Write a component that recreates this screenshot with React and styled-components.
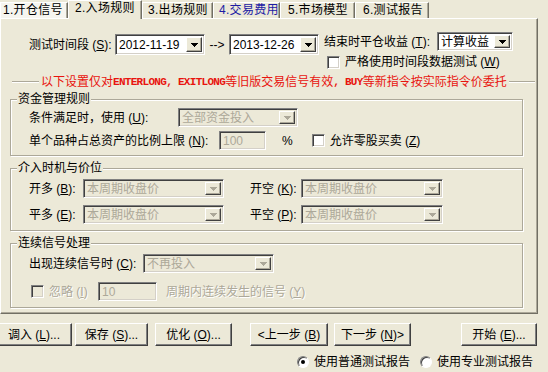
import React from 'react'
import styled, { createGlobalStyle } from 'styled-components'

const GlobalStyle = createGlobalStyle`
  html, body {
    margin: 0;
    padding: 0;
    background: #ece9d8;
  }
  body {
    font-family: "Liberation Sans", "Noto Sans CJK SC", sans-serif;
    font-size: 12px;
    color: #000;
  }
  u {
    text-decoration-thickness: 1px;
    text-underline-offset: 1px;
  }
`

const Window = styled.div`
  width: 548px;
  height: 372px;
  overflow: hidden;
  background: #ece9d8;
  display: flex;
  flex-direction: column;
  line-height: 14px;
`

const TabBar = styled.div`
  display: flex;
  align-items: flex-end;
  height: 18px;
  position: relative;
  z-index: 1;
`

const Tab = styled.div`
  box-sizing: border-box;
  width: ${p => p.$w}px;
  height: ${p => (p.$active ? 19 : 16)}px;
  margin-bottom: ${p => (p.$active ? -1 : 0)}px;
  padding-left: ${p => p.$pad}px;
  background: ${p => (p.$hot ? '#f6f5ef' : '#ece9d8')};
  border-top: 1px solid #fff;
  border-left: 1px solid #fff;
  border-right: 1px solid #716f64;
  box-shadow: inset -1px 0 #aca899;
  color: ${p => (p.$focus ? '#1c1ca4' : '#000')};
  white-space: nowrap;
  letter-spacing: 0.3px;
`

const Panel = styled.div`
  box-sizing: border-box;
  width: 538px;
  height: 296px;
  border-top: 1px solid #fff;
  border-left: 1px solid #fff;
  border-right: 1px solid #716f64;
  border-bottom: 1px solid #716f64;
  box-shadow: inset -1px -1px #aca899;
  padding: 13px 0 0 9px;
  display: flex;
  flex-direction: column;
`

const TopRow = styled.div`
  display: flex;
  align-items: flex-start;
  margin-left: 19px;
`

const Row = styled.div`
  display: flex;
  align-items: center;
  margin-top: ${p => p.$mt || 0}px;
  margin-left: ${p => p.$ml || 0}px;
`

const Column = styled.div`
  display: flex;
  flex-direction: column;
  margin-left: ${p => p.$ml || 0}px;
`

const Label = styled.span`
  box-sizing: border-box;
  width: ${p => (p.$w ? `${p.$w}px` : 'auto')};
  margin-left: ${p => p.$ml || 0}px;
  text-align: ${p => (p.$center ? 'center' : 'left')};
  white-space: pre;
  color: ${p => (p.$disabled ? '#aca899' : '#000')};
  text-shadow: ${p => (p.$disabled ? '1px 1px #fff' : 'none')};
`

const Combo = styled.div`
  box-sizing: border-box;
  width: ${p => p.$w}px;
  height: ${p => p.$h || 19}px;
  margin-left: ${p => p.$ml || 0}px;
  display: flex;
  align-items: center;
  padding: 1px;
  background: ${p => (p.$disabled ? '#ece9d8' : '#fff')};
  border: 1px solid;
  border-color: #808080 #fff #fff #808080;
  box-shadow: inset 1px 1px #404040, inset -1px -1px #d4d0c8;
  color: ${p => (p.$disabled ? '#aca899' : '#000')};
`

const ComboText = styled.span`
  flex: 1;
  padding-left: 2px;
  overflow: hidden;
  white-space: nowrap;
`

const DropButton = styled.span`
  box-sizing: border-box;
  width: 16px;
  align-self: stretch;
  margin: 1px;
  display: flex;
  align-items: center;
  justify-content: center;
  background: #ece9d8;
  border: 1px solid;
  border-color: #fff #404040 #404040 #fff;
  box-shadow: inset -1px -1px #aca899;
`

const TextBox = styled(Combo)`
  padding-left: 3px;
`

const Check = styled.span`
  box-sizing: border-box;
  width: 13px;
  height: 13px;
  flex: none;
  margin-left: ${p => p.$ml || 0}px;
  background: ${p => (p.$disabled ? '#ece9d8' : '#fff')};
  border: 1px solid;
  border-color: #808080 #fff #fff #808080;
  box-shadow: inset 1px 1px #404040, inset -1px -1px #d4d0c8;
`

const Group = styled.fieldset`
  box-sizing: border-box;
  width: 513px;
  margin: ${p => p.$mt}px 0 0 0;
  padding: ${p => p.$pt}px 0 ${p => p.$pb}px 0;
  border: 1px solid #aca899;
  box-shadow: inset 1px 1px #fff, 1px 1px #fff;
  min-inline-size: 0;
`

const Legend = styled.legend`
  margin-left: 6px;
  padding: 0 1px;
  line-height: 14px;
  background: #ece9d8;
`

const WarnRow = styled.div`
  display: flex;
  align-items: center;
  margin-top: 6px;
  color: #e8140e;
  white-space: pre;
`

const Rule = styled.span`
  width: ${p => p.$w}px;
  height: 0;
  border-top: 1px solid #aca899;
  border-bottom: 1px solid #fff;
  margin: 0 2px;
`

const WarnLatin = styled.span`
  font-family: "Liberation Mono", monospace;
  font-weight: bold;
  font-size: 11px;
  letter-spacing: -0.7px;
`

const ButtonRow = styled.div`
  display: flex;
  margin-top: 9px;
  margin-left: -4px;
  height: 23px;
`

const Button = styled.button`
  box-sizing: border-box;
  width: ${p => p.$w}px;
  height: 23px;
  margin: 0 0 0 ${p => p.$ml || 0}px;
  padding: 0;
  font: inherit;
  line-height: 14px;
  color: #000;
  background: #ece9d8;
  border: 1px solid;
  border-color: #fff #404040 #404040 #fff;
  box-shadow: inset -1px -1px #808080;
  white-space: pre;
`

const RadioRow = styled.div`
  display: flex;
  align-items: center;
  margin-top: 9px;
  margin-left: 297px;
`

const Radio = styled.span`
  box-sizing: border-box;
  width: 12px;
  height: 12px;
  flex: none;
  margin-left: ${p => p.$ml || 0}px;
  margin-right: 5px;
  border-radius: 50%;
  background: #fff;
  border: 1px solid;
  border-color: #808080 #fff #fff #808080;
  box-shadow: inset 1px 1px #404040;
  display: flex;
  align-items: center;
  justify-content: center;
  &::after {
    content: '';
    width: 4px;
    height: 4px;
    border-radius: 50%;
    background: ${p => (p.$on ? '#000' : 'transparent')};
  }
`

const Arrow = ({ disabled }) => (
  <svg width="7" height="4" viewBox="0 0 7 4" shapeRendering="crispEdges">
    <path
      d="M0 0h7v1h-1v1h-1v1h-1v1h-1v-1h-1v-1h-1v-1h-1z"
      fill={disabled ? '#aca899' : '#000'}
    />
  </svg>
)

const Select = ({ w, h, ml, disabled, children }) => (
  <Combo $w={w} $h={h} $ml={ml} $disabled={disabled}>
    <ComboText>{children}</ComboText>
    <DropButton>
      <Arrow disabled={disabled} />
    </DropButton>
  </Combo>
)

const tabs = [
  { t: '1.开仓信号', w: 68, pad: 2, hot: true },
  { t: '2.入场规则', w: 74, pad: 6, active: true },
  { t: '3.出场规则', w: 71, pad: 5 },
  { t: '4.交易费用', w: 67, pad: 5, focus: true },
  { t: '5.市场模型', w: 75, pad: 7 },
  { t: '6.测试报告', w: 74, pad: 7 },
]

export default function App() {
  return (
    <>
      <GlobalStyle />
      <Window>
        <TabBar>
          {tabs.map(tab => (
            <Tab key={tab.t} $w={tab.w} $pad={tab.pad} $active={tab.active} $hot={tab.hot} $focus={tab.focus}>
              {tab.t}
            </Tab>
          ))}
        </TabBar>
        <Panel>
          <TopRow>
            <Row $mt={2}>
              <Label $w={86}>测试时间段 (<u>S</u>):</Label>
              <Select w={90} h={21}>2012-11-19</Select>
              <Label $w={24} $center>--&gt;</Label>
              <Select w={90} h={21}>2013-12-26</Select>
            </Row>
            <Column $ml={5}>
              <Row>
                <Label $w={113}>结束时平仓收益 (<u>T</u>):</Label>
                <Select w={76}>计算收益</Select>
              </Row>
              <Row $mt={4}>
                <Check $ml={3} />
                <Label $ml={5}>严格使用时间段数据测试 (<u>W</u>)</Label>
              </Row>
            </Column>
          </TopRow>

          <WarnRow>
            <Rule $w={27} />
            以下设置仅对<WarnLatin>ENTERLONG, EXITLONG</WarnLatin>等旧版交易信号有效<WarnLatin>, BUY</WarnLatin>等新指令按实际指令价委托
            <Rule $w={26} />
          </WarnRow>

          <Group $mt={3} $pt={2} $pb={5}>
            <Legend>资金管理规则</Legend>
            <Row $ml={18}>
              <Label $w={149}>条件满足时，使用 (<u>U</u>):</Label>
              <Select w={120} disabled>全部资金投入</Select>
            </Row>
            <Row $ml={18} $mt={4}>
              <Label $w={190}>单个品种占总资产的比例上限 (<u>N</u>):</Label>
              <TextBox $w={47} $disabled>100</TextBox>
              <Label $ml={16}>%</Label>
              <Check $ml={19} />
              <Label $ml={5}>允许零股买卖 (<u>Z</u>)</Label>
            </Row>
          </Group>

          <Group $mt={5} $pt={4} $pb={6}>
            <Legend>介入时机与价位</Legend>
            <Row $ml={18}>
              <Label $w={54}>开多 (<u>B</u>):</Label>
              <Select w={141} disabled>本周期收盘价</Select>
              <Label $w={51} $ml={26}>开空 (<u>K</u>):</Label>
              <Select w={142} disabled>本周期收盘价</Select>
            </Row>
            <Row $ml={18} $mt={7}>
              <Label $w={54}>平多 (<u>E</u>):</Label>
              <Select w={141} disabled>本周期收盘价</Select>
              <Label $w={51} $ml={26}>平空 (<u>P</u>):</Label>
              <Select w={142} disabled>本周期收盘价</Select>
            </Row>
          </Group>

          <Group $mt={5} $pt={4} $pb={6}>
            <Legend>连续信号处理</Legend>
            <Row $ml={18}>
              <Label $w={114}>出现连续信号时 (<u>C</u>):</Label>
              <Select w={131} disabled>不再投入</Select>
            </Row>
            <Row $ml={20} $mt={9}>
              <Check $disabled />
              <Label $w={49} $ml={5} $disabled>忽略 (<u>I</u>)</Label>
              <TextBox $w={59} $disabled>10</TextBox>
              <Label $ml={9} $disabled>周期内连续发生的信号 (<u>Y</u>)</Label>
            </Row>
          </Group>
        </Panel>

        <ButtonRow>
          <Button $w={76}>调入 (<u>L</u>)...</Button>
          <Button $w={73} $ml={3}>保存 (<u>S</u>)...</Button>
          <Button $w={77} $ml={7}>优化 (<u>O</u>)...</Button>
          <Button $w={78} $ml={18}>&lt;上一步 (<u>B</u>)</Button>
          <Button $w={77} $ml={6}>下一步 (<u>N</u>)&gt;</Button>
          <Button $w={76} $ml={50}>开始 (<u>E</u>)...</Button>
        </ButtonRow>

        <RadioRow>
          <Radio $on />
          <Label>使用普通测试报告</Label>
          <Radio $ml={10} />
          <Label>使用专业测试报告</Label>
        </RadioRow>
      </Window>
    </>
  )
}
